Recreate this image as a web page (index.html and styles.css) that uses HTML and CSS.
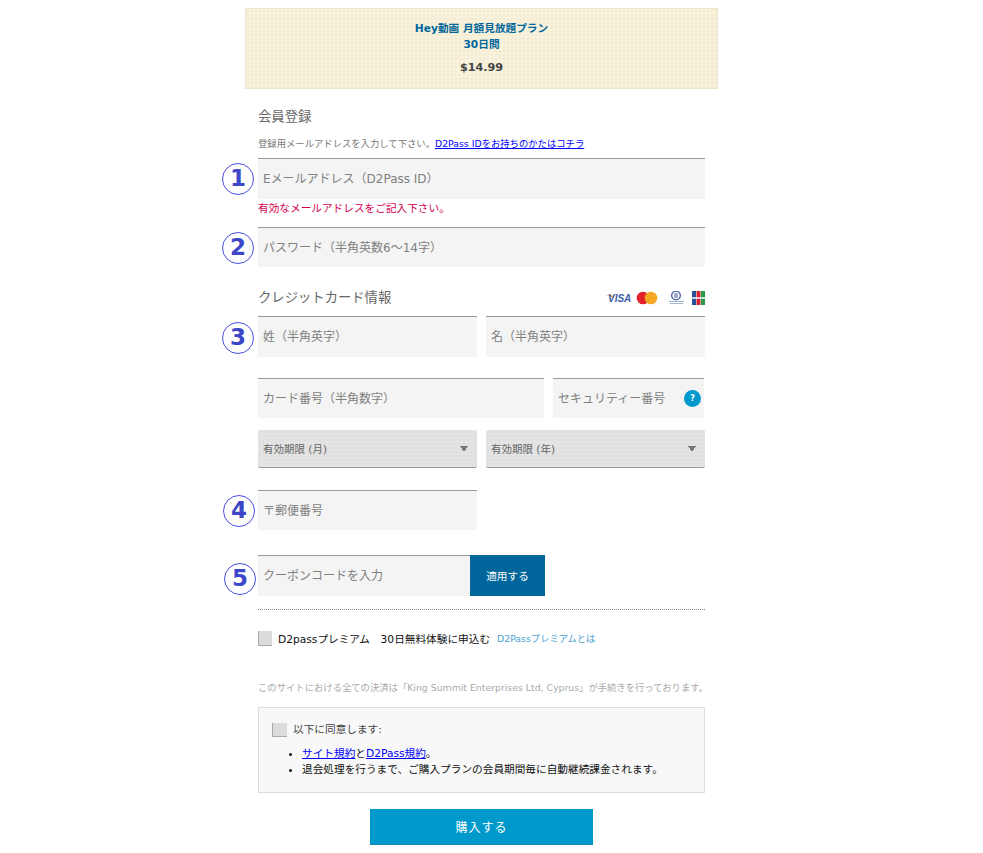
FILE: index.html
```html
<!DOCTYPE html>
<html lang="ja">
<head>
  <meta charset="UTF-8">
  <title>会員登録</title>
  <link rel="stylesheet" href="styles.css">
</head>
<body>
  <main class="page">
    <div class="plan">
      <p class="plan__name">Hey動画 月額見放題プラン<br>30日間</p>
      <p class="plan__price">$14.99</p>
    </div>

    <form class="form">
      <h2 class="form__title">会員登録</h2>
      <p class="form__lead">登録用メールアドレスを入力して下さい。<a href="#">D2Pass IDをお持ちのかたはコチラ</a></p>

      <div class="row row_email">
        <span class="num">1</span>
        <input class="field" type="text" placeholder="Eメールアドレス（D2Pass ID）">
      </div>
      <p class="error">有効なメールアドレスをご記入下さい。</p>

      <div class="row row_password">
        <span class="num">2</span>
        <input class="field" type="password" placeholder="パスワード（半角英数6～14字）">
      </div>

      <div class="card-head">
        <h3 class="card-head__title">クレジットカード情報</h3>
        <svg class="card-head__logos" width="99" height="14" viewBox="0 0 99 14">
          <path d="M0 4h6l2 3z" fill="#e8a53c"/>
          <text x="2" y="11" font-family="Liberation Sans" font-size="10" font-weight="700" font-style="italic" fill="#3f5ea8">VISA</text>
          <circle cx="37" cy="7" r="6.300" fill="#e2232b"/>
          <circle cx="45" cy="7" r="6.300" fill="#f5a623"/>
          <circle cx="70" cy="4.500" r="4.300" fill="none" stroke="#3c5a9a" stroke-width="1.300"/>
          <path d="M69 2v5M71 2v5" stroke="#3c5a9a"/>
          <path d="M63 10.500h15M64 12.500h13" stroke="#a5b5d2"/>
          <rect x="86" width="4" height="14" fill="#27509f"/>
          <rect x="90.500" width="4" height="14" fill="#d8232f"/>
          <rect x="95" width="4" height="14" fill="#2a9a4a"/>
          <path d="M86 7h13" stroke="#fff" stroke-width="1.500"/>
        </svg>
      </div>

      <div class="row row_split">
        <span class="num num_3">3</span>
        <input class="field" type="text" placeholder="姓（半角英字）">
        <input class="field" type="text" placeholder="名（半角英字）">
      </div>

      <div class="row row_card">
        <input class="field field_number" type="text" placeholder="カード番号（半角数字）">
        <div class="security">
          <input class="field" type="text" placeholder="セキュリティー番号">
          <span class="security__help">?</span>
        </div>
      </div>

      <div class="row row_split row_expiry">
        <select class="select"><option>有効期限 (月)</option></select>
        <select class="select"><option>有効期限 (年)</option></select>
      </div>

      <div class="row row_postal">
        <span class="num num_4">4</span>
        <input class="field field_postal" type="text" placeholder="〒郵便番号">
      </div>

      <div class="row row_coupon">
        <span class="num num_5">5</span>
        <input class="field field_coupon" type="text" placeholder="クーポンコードを入力">
        <button class="btn-apply" type="button">適用する</button>
      </div>

      <label class="premium">
        <span class="check"></span>
        <span class="premium__text">D2passプレミアム　30日無料体験に申込む</span>
        <a class="premium__link" href="#">D2Passプレミアムとは</a>
      </label>

      <p class="note">このサイトにおける全ての決済は「King Summit Enterprises Ltd, Cyprus」が手続きを行っております。</p>

      <div class="terms">
        <label class="terms__agree"><span class="check check_big"></span>以下に同意します:</label>
        <ul class="terms__list">
          <li><a href="#">サイト規約</a>と<a href="#">D2Pass規約</a>。</li>
          <li>退会処理を行うまで、ご購入プランの会員期間毎に自動継続課金されます。</li>
        </ul>
      </div>

      <button class="btn-buy" type="button">購入する</button>
    </form>
  </main>
</body>
</html>
```

FILE: styles.css
```css
*, *:after, *:before {
  box-sizing: border-box;
}

html, body {
  margin: 0;
  background-color: #fff;
  font-family: "DejaVu Sans", "Noto Sans CJK JP", sans-serif;
}

a {
  color: #00f;
}

.page {
  width: 473px;
  margin: 8px 0 8px 245px;
}

.plan {
  height: 81px;
  padding-top: 12px;
  text-align: center;
  background-color: #f8f2dc;
  background-image: radial-gradient(#f2ebd0 1px, transparent 1px);
  background-size: 4px 4px;
  border: 1px solid #ece5c9;
}

.plan__name {
  margin: 0;
  color: #00669b;
  font-size: 10.670px;
  font-weight: 700;
  line-height: 16px;
}

.plan__price {
  margin: 7px 0 0;
  color: #444;
  font-size: 11.200px;
  font-weight: 700;
  line-height: 16px;
}

.form {
  padding: 0 13px;
}

.form__title {
  margin: 18px 0 0;
  color: #666;
  font-size: 13.330px;
  font-weight: 400;
  line-height: 20px;
}

.form__lead {
  margin: 10px 0 0;
  color: #777;
  font-size: 9.330px;
  line-height: 14px;
}

.row {
  position: relative;
  display: flex;
  margin-top: 8px;
}

.row_email {
  margin-top: 7px;
}

.row_password {
  margin-top: 11px;
}

.row_split {
  justify-content: space-between;
  margin-top: 8px;
}

.row_card {
  justify-content: space-between;
  margin-top: 21px;
}

.row_expiry {
  margin-top: 12px;
}

.row_postal {
  margin-top: 22px;
}

.row_coupon {
  margin-top: 25px;
  padding-bottom: 13px;
  border-bottom: 1px dotted #888;
}

/* 画像の上に重ねた丸数字 */
.num {
  position: absolute;
  top: 5px;
  left: -36px;
  width: 32px;
  height: 32px;
  border: 1px solid #4a4fe0;
  border-radius: 50%;
  color: #3d48c8;
  font-size: 23px;
  font-weight: 700;
  line-height: 29px;
  text-align: center;
}

.num_3 {
  top: 6px;
}

.num_4 {
  left: -35px;
}

.num_5 {
  top: 8px;
  left: -34px;
}

.field {
  display: block;
  width: 100%;
  height: 41px;
  padding: 0 5px;
  background-color: #f4f4f4;
  border: none;
  border-top: 1px solid #999;
  border-radius: 0;
  outline: none;
  font-family: inherit;
  font-size: 12px;
}

.field::placeholder {
  color: #808080;
  opacity: 1;
}

.row_password .field,
.row_card .field,
.row_postal .field {
  height: 40px;
}

.row_split .field {
  width: 219px;
}

.row_card .field_number {
  width: 286px;
}

.security {
  position: relative;
  width: 151px;
  margin-right: 1px;
}

.security__help {
  position: absolute;
  top: 12px;
  right: 3px;
  width: 17px;
  height: 17px;
  border-radius: 50%;
  background-color: #0099cc;
  color: #fff;
  font-size: 8px;
  font-weight: 700;
  line-height: 17px;
  text-align: center;
}

.field_postal {
  width: 219px;
}

.field_coupon {
  width: 212px;
}

.error {
  margin: 2px 0 0;
  color: #d6004f;
  font-size: 10.670px;
  line-height: 15px;
}

.card-head {
  display: flex;
  justify-content: space-between;
  align-items: center;
  margin-top: 21px;
}

.card-head__title {
  margin: 0;
  color: #666;
  font-size: 13.330px;
  font-weight: 400;
  line-height: 20px;
}

.select {
  width: 219px;
  height: 38px;
  padding: 0 5px;
  color: #666;
  background-color: #e4e4e4;
  background-image:
    linear-gradient(to bottom left, #777 50%, transparent 50%),
    linear-gradient(to bottom right, #777 50%, transparent 50%),
    radial-gradient(#dedede 1px, transparent 1px);
  background-position: right 13px top 16px, right 9px top 16px, 0 0;
  background-size: 4px 6px, 4px 6px, 4px 4px;
  background-repeat: no-repeat, no-repeat, repeat;
  border: none;
  border-bottom: 1px solid #999;
  border-radius: 2px;
  font-family: inherit;
  font-size: 10.500px;
  appearance: none;
}

.btn-apply {
  width: 75px;
  height: 41px;
  padding: 0;
  background-color: #00669b;
  border: none;
  color: #fff;
  font-family: inherit;
  font-size: 10.670px;
}

.premium {
  display: flex;
  align-items: center;
  margin-top: 20px;
  height: 16px;
  font-size: 10.670px;
}

.check {
  display: inline-block;
  flex: none;
  width: 14px;
  height: 15px;
  background-color: #dcdcdc;
  border-left: 1px solid #aaa;
  border-bottom: 1px solid #aaa;
}

.check_big {
  width: 15px;
  height: 14px;
  margin-right: 6px;
  vertical-align: -4px;
}

.premium__text {
  margin-left: 6px;
  color: #111;
}

.premium__link {
  margin-left: 7px;
  color: #4aa3d0;
  font-size: 9.330px;
  text-decoration: none;
}

.note {
  margin: 35px 0 0;
  color: #aaa;
  font-size: 9.330px;
  line-height: 14px;
  white-space: nowrap;
}

.terms {
  height: 86px;
  margin-top: 12px;
  padding: 14px 13px 0;
  background-color: #f8f8f8;
  border: 1px solid #ddd;
  font-size: 10.670px;
  color: #111;
}

.terms__agree {
  display: block;
  line-height: 16px;
  color: #444;
}

.terms__list {
  margin: 8px 0 0;
  padding-left: 30px;
  line-height: 16px;
}

.btn-buy {
  display: block;
  width: 223px;
  height: 36px;
  margin: 16px auto 0;
  background-color: #0099cc;
  border: none;
  border-bottom: 1px solid #1187ae;
  color: #fff;
  font-family: inherit;
  font-size: 12px;
  letter-spacing: 1px;
}
```
